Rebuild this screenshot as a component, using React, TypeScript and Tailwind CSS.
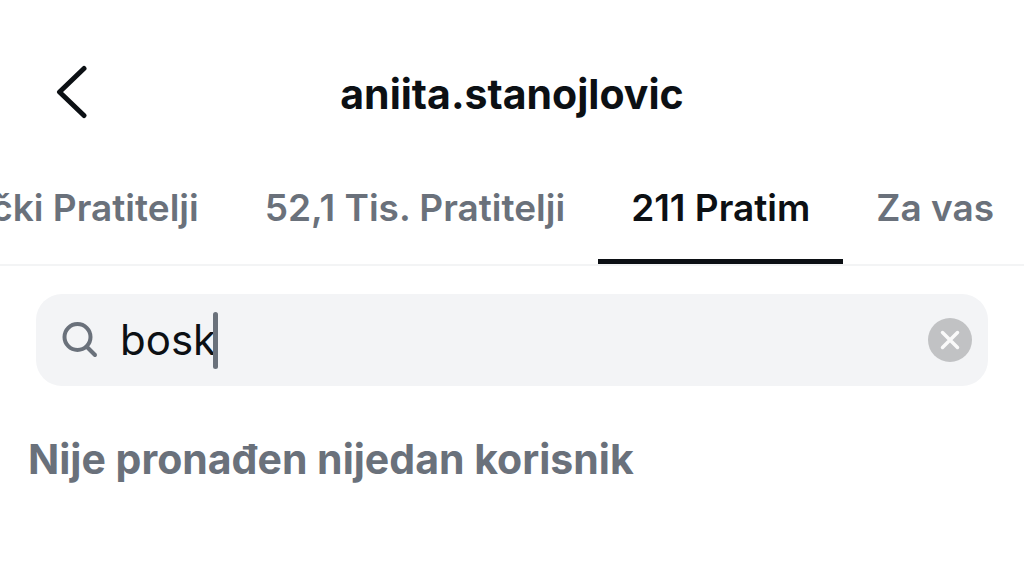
import { useState } from 'react';
import { clsx } from 'clsx';

const tabs = ['Zajednički Pratitelji', '52,1 Tis. Pratitelji', '211 Pratim', 'Za vas'];

export default function App() {
  const [active, setActive] = useState(2);
  const [query, setQuery] = useState('bosk');

  return (
    <main className="min-h-screen bg-white text-[#0c1014] font-['Inter',sans-serif]">
      {/* Header */}
      <header className="grid grid-cols-[1fr_auto_1fr] items-start px-14 pt-16">
        <button aria-label="Nazad" className="justify-self-start">
          <svg width="32" height="56" viewBox="0 0 32 56" fill="none" stroke="currentColor" strokeWidth="5" strokeLinecap="round" strokeLinejoin="round">
            <path d="M28 4.5 3.5 28 28 51.5" />
          </svg>
        </button>
        <h1 className="text-[41px] leading-[60px] font-bold">aniita.stanojlovic</h1>
      </header>

      {/* Tabs */}
      <nav className="flex justify-end overflow-hidden border-b-2 border-[#f3f4f5] pt-9">
        {tabs.map((tab, i) => (
          <button
            key={tab}
            onClick={() => setActive(i)}
            className={clsx(
              'shrink-0 whitespace-nowrap border-b-[5px] px-[33px] pt-6 pb-[27px] text-[37px] leading-[48px] font-semibold last:pr-[30px]',
              i === active ? 'border-[#0c1014]' : 'border-transparent text-[#6a717b]'
            )}
          >
            {tab}
          </button>
        ))}
      </nav>

      {/* Search */}
      <div className="mx-9 mt-7 flex h-[92px] items-center rounded-[26px] bg-[#f3f4f6] pl-6 pr-4">
        <svg className="shrink-0 text-[#6a717b]" width="40" height="40" viewBox="0 0 40 40" fill="none" stroke="currentColor" strokeWidth="4" strokeLinecap="round">
          <circle cx="17.5" cy="17" r="13" />
          <path d="m27 27 8 8" />
        </svg>
        <input
          aria-label="Pretraži"
          value={query}
          onChange={(e) => setQuery(e.target.value)}
          className="ml-5 [field-sizing:content] bg-transparent text-[42px] leading-[56px] caret-transparent outline-none"
        />
        <span className="-ml-[3px] h-[57px] w-[5px] shrink-0 rounded-full bg-[#6a717b]" />
        <button aria-label="Obriši" onClick={() => setQuery('')} className="ml-auto shrink-0">
          <svg width="44" height="44" viewBox="0 0 44 44" fill="none">
            <circle cx="22" cy="22" r="22" fill="#c1c2c4" />
            <path d="m14.5 14.5 15 15m0-15-15 15" stroke="#fafafa" strokeWidth="3.5" strokeLinecap="round" />
          </svg>
        </button>
      </div>

      <p className="px-7 pt-[43px] text-[41px] leading-[60px] font-bold text-[#6a717b]">
        Nije pronađen nijedan korisnik
      </p>
    </main>
  );
}
